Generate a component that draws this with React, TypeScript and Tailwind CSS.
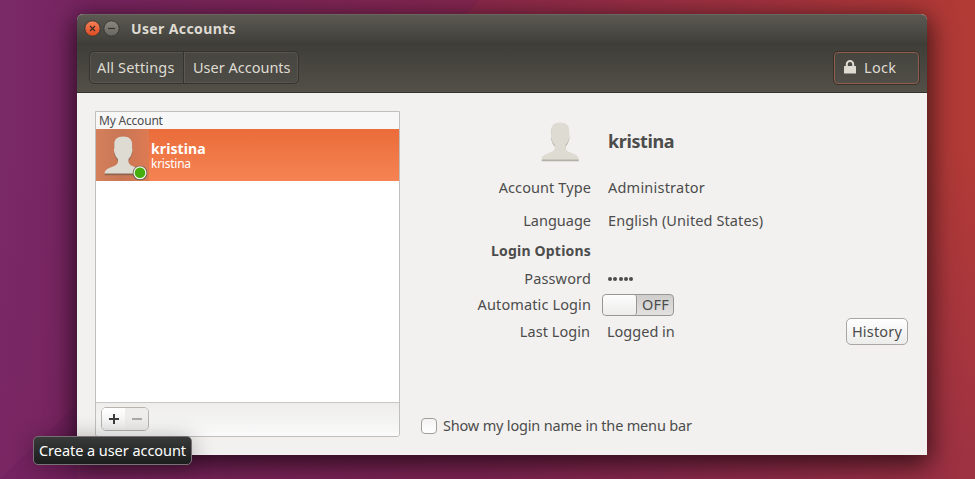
import React from "react";

function Avatar({ shade }: { shade: string }) {
  return (
    <svg width="40" height="42" viewBox="0 0 40 42" className="block">
      <path
        d="M20.200 3.200C14 3.200 11.300 6.200 11.300 11V15.500C10.600 16.200 10.900 18.500 11.900 20.600C12.400 22.800 13.600 24.200 14.800 25.500C15.600 29.500 14.500 31.500 10 33.300C5 35.200 2 36.500 1.500 40.300H39C38.500 36.500 35.500 35.200 30.500 33.300C26 31.500 25 29.500 25.600 25.500C26.800 24.200 28 22.800 28.500 20.600C29.500 18.500 29.800 16.200 29.100 15.500V11C29.100 6.200 26.400 3.200 20.200 3.200z"
        fill={shade}
      />
      <path
        d="M20.200 1.500C14 1.500 11.300 4.500 11.300 9.300V13.800C10.600 14.500 10.900 16.800 11.900 18.900C12.400 21.100 13.600 22.500 14.800 23.800C15.600 27.800 14.500 29.800 10 31.600C5 33.500 2 34.800 1.500 38.600H39C38.500 34.800 35.500 33.500 30.500 31.600C26 29.800 25 27.800 25.600 23.800C26.800 22.500 28 21.100 28.500 18.900C29.500 16.800 29.800 14.500 29.100 13.800V9.300C29.100 4.500 26.400 1.500 20.200 1.500z"
        fill="#dedbd2"
      />
    </svg>
  );
}

function Row({ height, label, labelClass, children }: { height: string; label: string; labelClass: string; children?: React.ReactNode }) {
  return (
    <div className={"flex items-center " + height}>
      <div className="flex w-[191px] justify-end">
        <span className={labelClass}>{label}</span>
      </div>
      {children}
    </div>
  );
}

function Wallpaper() {
  return (
    <svg className="absolute inset-0 h-full w-full" viewBox="0 0 975 479" preserveAspectRatio="none">
      <defs>
        <linearGradient id="base" x1="0" y1="0" x2="1" y2="0">
          <stop offset="0" stopColor="#7b2a68" />
          <stop offset="0.09" stopColor="#76245f" />
          <stop offset="0.5" stopColor="#85264f" />
          <stop offset="0.88" stopColor="#a8353c" />
          <stop offset="1" stopColor="#b33b35" />
        </linearGradient>
        <linearGradient id="low" x1="0" y1="0" x2="0" y2="1">
          <stop offset="0.3" stopColor="#76205a" stopOpacity="0" />
          <stop offset="1" stopColor="#76205a" stopOpacity="0.35" />
        </linearGradient>
      </defs>
      <rect width="975" height="479" fill="url(#base)" />
      <rect width="975" height="479" fill="url(#low)" />
      <path d="M0 479L77 404V479z" fill="#651b59" opacity="0.2" />
      <path d="M480 0H975V14H466z" fill="#b33b35" opacity="0.15" />
    </svg>
  );
}

export default function App() {
  return (
    <div className="relative h-[479px] w-[975px] overflow-hidden bg-[#7b2a68] pl-[77px] pt-[14px] font-['Noto_Sans','Open_Sans',sans-serif] text-[14.5px] leading-[20px] whitespace-nowrap text-[#4c4c4c]">
      <Wallpaper />

      <div className="relative flex h-[441px] w-[850px] flex-col rounded-t-[6px] bg-[#f2f1ef] shadow-[0_7px_26px_3px_rgba(0,0,0,0.65)]">
        <div className="flex h-[29px] shrink-0 items-center rounded-t-[6px] border-t border-[#68665f] bg-linear-to-b from-[#5b5952] to-[#403f3a] pl-[7px]">
          <svg width="36" height="18" viewBox="0 0 36 18">
            <defs>
              <linearGradient id="close" x1="0" y1="0" x2="0" y2="1">
                <stop offset="0" stopColor="#f78259" />
                <stop offset="1" stopColor="#dc4a20" />
              </linearGradient>
              <linearGradient id="min" x1="0" y1="0" x2="0" y2="1">
                <stop offset="0" stopColor="#8a8880" />
                <stop offset="1" stopColor="#67655f" />
              </linearGradient>
            </defs>
            <circle cx="8.500" cy="8.500" r="7.700" fill="url(#close)" stroke="#393733" />
            <path d="M6 6l5 5M11 6l-5 5" stroke="#3b2a22" strokeWidth="1.200" />
            <circle cx="27.500" cy="8.500" r="7.700" fill="url(#min)" stroke="#393733" />
            <path d="M24 8.500h7" stroke="#34332f" strokeWidth="1.200" />
          </svg>
          <span className="ml-[11px] text-[14px] font-bold tracking-[0.38px] text-[#dfdbd2]">User Accounts</span>
        </div>

        <div className="flex h-[50px] shrink-0 items-start justify-between border-b border-[#33322e] bg-linear-to-b from-[#3e3d38] to-[#535048] pl-[12px] pr-[7px] pt-[8px] text-[#dfdbd2]">
          <div className="flex h-[33px] w-[210px] rounded-[5px] border border-[#34332f] bg-linear-to-b from-[#474640] to-[#4d4b45] shadow-[inset_0_0_0_1px_#57554e]">
            <div className="flex w-[94px] items-center border-r border-[#353430] pb-[2px] pl-[7px]">
              <span className="tracking-[0.15px]">All Settings</span>
            </div>
            <div className="flex flex-1 items-center border-l border-[#5b5952] pb-[2px] pl-[8px]">
              <span>User Accounts</span>
            </div>
          </div>
          <div className="flex h-[34px] w-[87px] items-center rounded-[5px] border border-[#3a302b] bg-linear-to-b from-[#45443e] to-[#504e47] shadow-[inset_0_0_0_1px_#8e5f4c]">
            <svg width="12" height="14" viewBox="0 0 12 14" className="ml-[10px] -mt-[3px]">
              <path d="M2.800 7V4.200a3.200 3.200 0 016.400 0V7" fill="none" stroke="#dfdbd2" strokeWidth="2" />
              <rect x="0" y="6" width="12" height="7.500" rx="0.600" fill="#dfdbd2" />
            </svg>
            <span className="ml-[8px] pb-[2px] tracking-[0.3px]">Lock</span>
          </div>
        </div>

        <div className="flex h-[362px] pl-[18px] pt-[18px]">
          <div className="flex h-[326px] w-[305px] flex-col rounded-b-[3px] border border-[#c1bfbc] bg-white">
            <div className="flex h-[17px] shrink-0 items-center bg-[#f7f7f7] pl-[3px]">
              <span className="text-[12px] tracking-[-0.2px]">My Account</span>
            </div>
            <div className="flex h-[52px] shrink-0 bg-linear-to-b from-[#ea6c3a] to-[#f68353] text-white">
              <div className="relative h-[52px] w-[53px] bg-linear-to-r from-[#d4805c] via-[#c97655] to-[#dd7a52] pl-[7px] pt-[6px]">
                <Avatar shade="#8c6450" />
                <svg width="16" height="16" viewBox="0 0 16 16" className="absolute left-[36px] top-[36px]">
                  <circle cx="8" cy="8" r="7.300" fill="#5d5b4c" />
                  <circle cx="8" cy="7.800" r="5.900" fill="#45ae0c" stroke="#f6f3e8" strokeWidth="1.300" />
                </svg>
              </div>
              <div className="flex flex-col pl-[2px] pt-[12px]">
                <span className="h-[15px] text-[14px] leading-[15px] font-bold tracking-[0.1px]">kristina</span>
                <span className="h-[15px] text-[12px] leading-[15px] tracking-[-0.25px]">kristina</span>
              </div>
            </div>
            <div className="flex-1" />
            <div className="h-[34px] shrink-0 rounded-b-[3px] border-t border-[#c9c7c4] bg-linear-to-b from-[#eeedec] to-[#fafafa] pl-[5px] pt-[4px]">
              <div className="flex h-[24px] w-[48px] overflow-hidden rounded-[5px] border border-[#b7b4b0]">
                <div className="flex w-[23px] items-center justify-center bg-linear-to-b from-white to-[#ededed]">
                  <svg width="12" height="12" viewBox="0 0 12 12">
                    <path d="M6 1v10M1 6h10" stroke="#3c3c3c" strokeWidth="2" />
                  </svg>
                </div>
                <div className="flex flex-1 items-center justify-center bg-[#eeedeb]">
                  <svg width="12" height="12" viewBox="0 0 12 12">
                    <path d="M1 6h10" stroke="#969491" strokeWidth="1.500" />
                  </svg>
                </div>
              </div>
            </div>
          </div>

          <div className="flex w-[527px] flex-col">
            <div className="flex h-[61px] items-center pl-[140px]">
              <Avatar shade="#b5b1a9" />
              <span className="ml-[28px] pb-[2px] text-[18px] leading-[24px] font-bold tracking-[-0.4px]">kristina</span>
            </div>
            <Row height="h-[32px]" label="Account Type" labelClass="pb-[2px] tracking-[0.1px]">
              <span className="ml-[17px] pb-[2px] tracking-[0.22px]">Administrator</span>
            </Row>
            <Row height="h-[33px]" label="Language" labelClass="pb-[2px]">
              <span className="ml-[17px] pb-[2px] tracking-[0.1px]">English (United States)</span>
            </Row>
            <Row height="h-[28px]" label="Login Options" labelClass="text-[14px] font-bold tracking-[0.2px]" />
            <Row height="h-[27px]" label="Password" labelClass="pb-[2px] tracking-[0.15px]">
              <div className="ml-[17px] flex gap-[1.25px]">
                {[0, 1, 2, 3, 4].map((i) => (
                  <span key={i} className="h-[4px] w-[4px] rounded-full bg-[#4c4c4c]" />
                ))}
              </div>
            </Row>
            <Row height="h-[26px]" label="Automatic Login" labelClass="pb-[2px] tracking-[0.12px]">
              <div className="ml-[11px] flex h-[22px] w-[72px] overflow-hidden rounded-[4px] border border-[#989694] bg-linear-to-b from-[#cfcecd] to-[#e2e1e0]">
                <div className="h-[20px] w-[34px] rounded-[3px] border-r border-[#989694] bg-linear-to-b from-[#fdfdfd] to-[#ececeb]" />
                <span className="ml-[5px] leading-[19px] tracking-[0.2px]">OFF</span>
              </div>
            </Row>
            <Row height="h-[28px]" label="Last Login" labelClass="pb-[2px] pr-[1px] tracking-[0.05px]">
              <span className="ml-[16px] pb-[2px]">Logged in</span>
              <button className="-mt-[2px] mr-[19px] ml-auto flex h-[27px] w-[62px] items-center justify-center rounded-[5px] border border-[#a9a6a3] bg-linear-to-b from-white to-[#ececeb] tracking-[0.2px]">
                History
              </button>
            </Row>
            <div className="mt-[70px] flex h-[20px] items-center pl-[21px]">
              <span className="h-[16px] w-[16px] rounded-[4px] border border-[#a19f9c] bg-linear-to-b from-[#f3f3f3] to-white" />
              <span className="ml-[6px] pb-[2px] tracking-[-0.18px]">Show my login name in the menu bar</span>
            </div>
          </div>
        </div>
      </div>

      <div className="absolute left-[33px] top-[436px] flex h-[29px] w-[159px] items-center rounded-[5px] border border-[#777176] bg-linear-to-b from-[#383b3a] to-[#1b1e1d] pl-[5px] text-white shadow-[0_2px_22px_rgba(0,0,0,0.3)]">
        <span className="pb-[2px] tracking-[-0.05px]">Create a user account</span>
      </div>
    </div>
  );
}
